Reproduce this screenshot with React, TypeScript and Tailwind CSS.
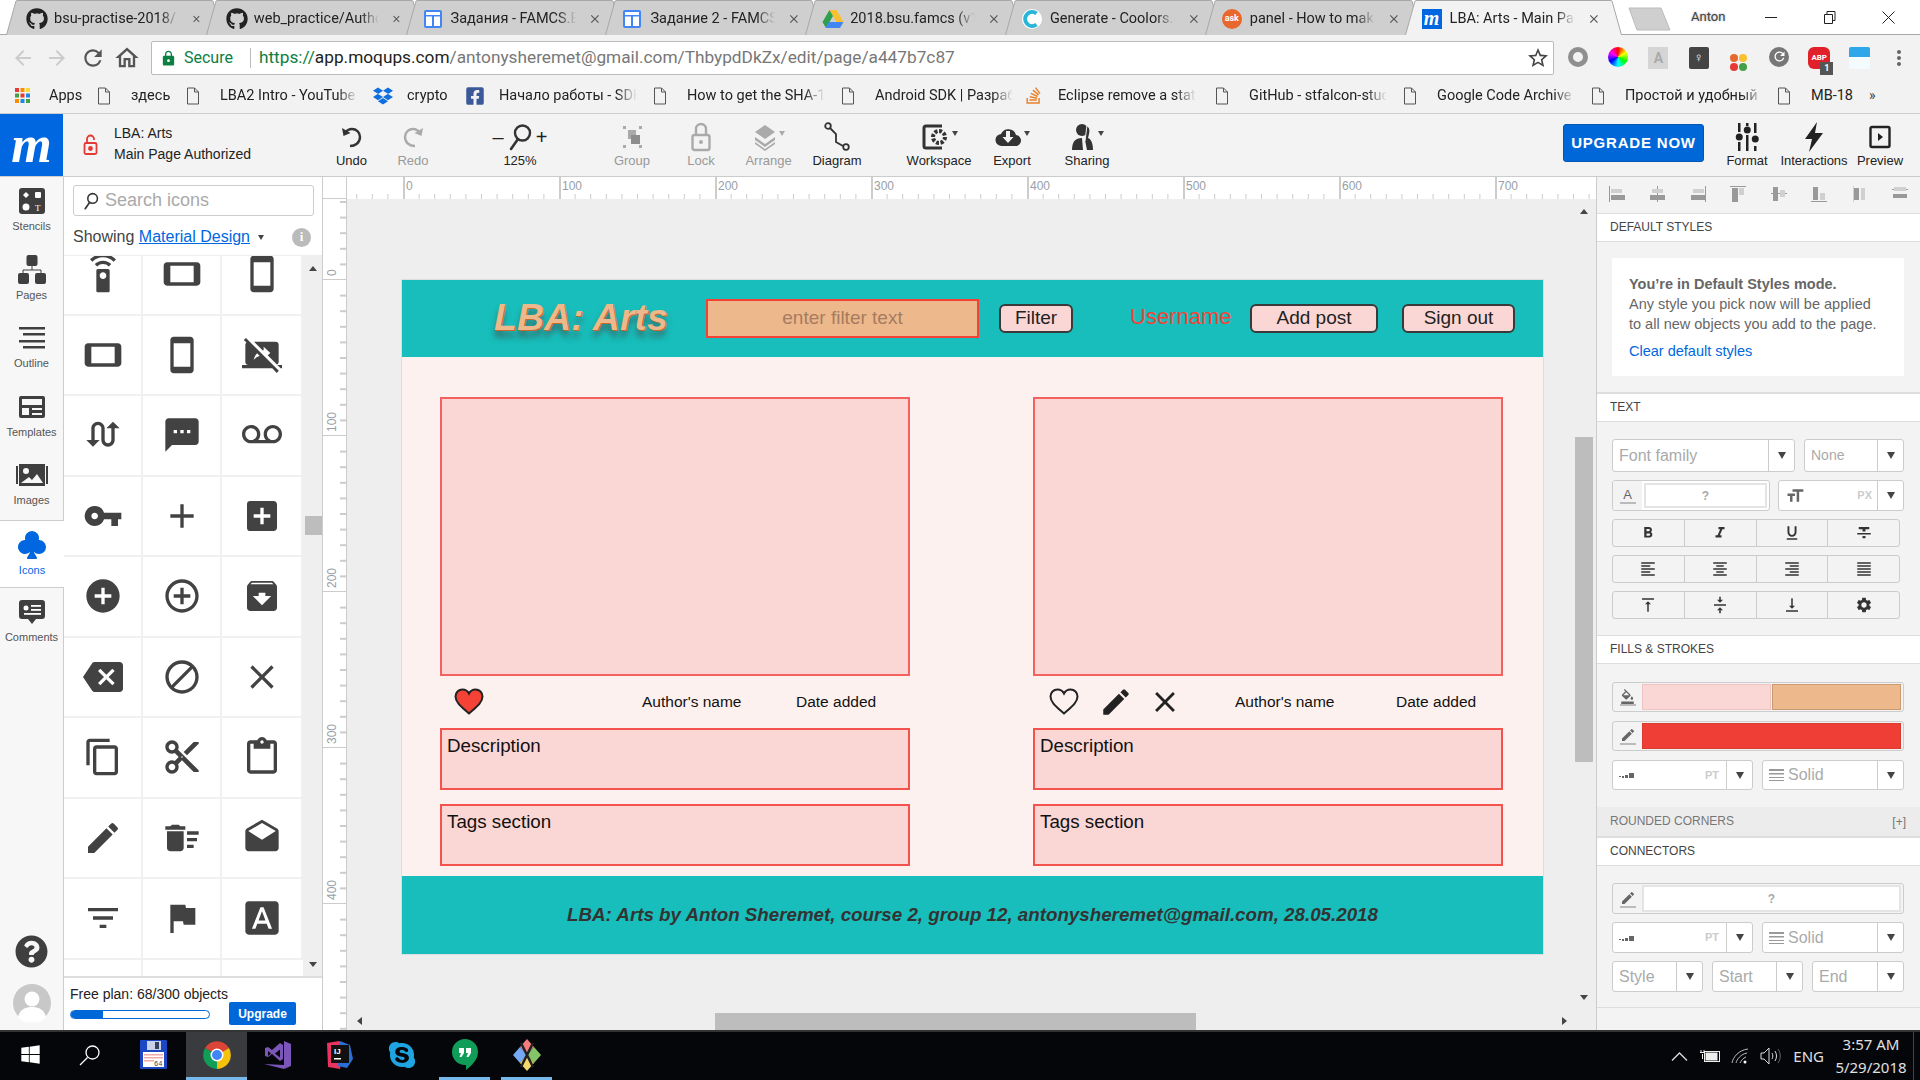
import React from 'react';
import { FaGithub, FaQuestionCircle, FaWindows, FaSkype, FaFacebookSquare, FaDropbox, FaStackOverflow } from 'react-icons/fa';
import { BsSuitClubFill } from 'react-icons/bs';
import {
  MdSettingsRemote, MdStayCurrentLandscape, MdStayCurrentPortrait, MdStayPrimaryLandscape, MdStayPrimaryPortrait, MdStopScreenShare,
  MdSwapCalls, MdTextsms, MdVoicemail, MdVpnKey, MdAdd, MdAddBox, MdAddCircle, MdControlPoint, MdArchive, MdBackspace, MdBlock, MdClear,
  MdContentCopy, MdContentCut, MdContentPaste, MdCreate, MdDeleteSweep, MdDrafts, MdFilterList, MdFlag, MdFontDownload, MdSettings,
  MdFormatBold, MdFormatItalic, MdFormatUnderlined, MdFormatStrikethrough, MdFormatAlignLeft, MdFormatAlignCenter, MdFormatAlignRight, MdFormatAlignJustify,
  MdVerticalAlignTop, MdVerticalAlignCenter, MdVerticalAlignBottom, MdFormatColorFill, MdFormatSize, MdClose, MdLock, MdArrowBack, MdArrowForward, MdRefresh, MdStarBorder, MdMoreVert, MdOutlineHome,
} from 'react-icons/md';

const Doc = () => (
  <svg width="14" height="18" viewBox="0 0 14 18" fill="none" stroke="#555" strokeWidth="1"><path d="M1.5 1h7l4 4v12h-11z" /><path d="M8.5 1v4h4" /></svg>
);
const AppsIcon = () => (
  <svg width="16" height="16" viewBox="0 0 16 16">
    {[['#e53935', '#fb8c00', '#fdd835'], ['#43a047', '#e53935', '#1e88e5'], ['#fb8c00', '#1e88e5', '#43a047']].map((r, y) => r.map((c, x) => <rect key={`${x}${y}`} x={x * 5.5} y={y * 5.5} width="4" height="4" fill={c} />))}
  </svg>
);
const DocTile = () => (
  <svg width="20" height="20" viewBox="0 0 20 20"><rect x="1" y="1" width="18" height="18" rx="2" fill="#4285f4" /><rect x="3" y="3" width="14" height="3" fill="#fff" /><rect x="3" y="7.5" width="6" height="9.5" fill="#fff" /><rect x="11" y="7.5" width="6" height="9.5" fill="#fff" /></svg>
);
const Drive = () => (
  <svg width="22" height="20" viewBox="0 0 22 20"><path d="M7.5 1h7l7 12h-7z" fill="#fbc02d" /><path d="M7.5 1l3.5 6-7 12L.5 13z" fill="#2e9e4f" /><path d="M7 13h14.5L18 19H3.5z" fill="#4285f4" /></svg>
);
const Coolors = () => (
  <svg width="20" height="20" viewBox="0 0 20 20"><circle cx="10" cy="10" r="10" fill="#fff" /><path d="M14.5 4.5a7 7 0 1 0 0 11" fill="none" stroke="#27b5d8" strokeWidth="4" /></svg>
);
const Ask = () => (
  <div className="w-[20px] h-[20px] rounded-full bg-[#e8672c] text-white text-[9px] font-bold flex items-center justify-center">ask</div>
);
const MTile = () => (
  <div className="w-[20px] h-[20px] bg-[#0067e0] text-white text-[20px] leading-[18px] italic font-bold text-center font-['Liberation_Serif',serif]">m</div>
);

const tabs: [string, React.ReactNode, string][] = [
  ['bsu-practise-2018/', <FaGithub size={22} color="#222" />, 'w-[28px]'],
  ['web_practice/Authorization', <FaGithub size={22} color="#222" />, 'w-[28px]'],
  ['Задания - FAMCS.BSU', <DocTile />, 'w-[28px] -ml-[3px]'],
  ['Задание 2 - FAMCS.BSU', <DocTile />, 'w-[28px] -ml-[3px]'],
  ['2018.bsu.famcs (v1.0)', <Drive />, 'w-[28px] -ml-[3px]'],
  ['Generate - Coolors.co', <Coolors />, 'w-[28px] -ml-[3px]'],
  ['panel - How to make', <Ask />, 'w-[28px] -ml-[3px]'],
  ['LBA: Arts - Main Page', <MTile />, 'w-[28px] -ml-[3px]'],
];

const Tab = ({ label, icon, active, iw }: { label: string; icon: React.ReactNode; active?: boolean; iw: string }) => (
  <div className="relative w-[199.800px] h-[35px] shrink-0">
    <svg className="absolute left-[-6px] top-0" width="217" height="36" viewBox="0 0 217 36">
      <path d="M0.5 35 L10 1 Q10.5 0.5 12 0.5 H205 Q206.5 0.5 207 1 L216.5 35" fill={active ? '#f2f2f2' : '#cfcfcf'} stroke="#a8a8a8" strokeWidth="1" />
    </svg>
    <div className="relative flex items-center h-full pl-[14px] pr-[10px] pt-[2px] text-[#222]">
      <div className={`${iw} shrink-0 flex`}>{icon}</div>
      <div className="w-[125px] shrink-0 overflow-hidden whitespace-nowrap text-[14.5px] [mask-image:linear-gradient(to_right,black_85%,transparent)]">{label}</div>
      <MdClose size={14} color="#555" className="ml-[12px]" />
    </div>
  </div>
);

const bookmarks: [string, React.ReactNode, string][] = [
  ['Apps', <AppsIcon />, 'w-[82px]'],
  ['здесь', <Doc />, 'w-[89px]'],
  ['LBA2 Intro - YouTube', <Doc />, 'w-[187px]'],
  ['crypto', <FaDropbox size={20} color="#0d6fe0" />, 'w-[92px]'],
  ['Начало работы - SDK', <FaFacebookSquare size={20} color="#3b5998" />, 'w-[188px]'],
  ['How to get the SHA-1', <Doc />, 'w-[188px]'],
  ['Android SDK | Разработка', <Doc />, 'w-[183px]'],
  ['Eclipse remove a static', <FaStackOverflow size={19} color="#e8812c" />, 'w-[191px]'],
  ['GitHub - stfalcon-studio', <Doc />, 'w-[188px]'],
  ['Google Code Archive', <Doc />, 'w-[188px]'],
  ['Простой и удобный', <Doc />, 'w-[186px]'],
  ['MB-18', <Doc />, 'w-[92px]'],
];

const Tool = ({ w, label, icon, off, caret }: { w: string; label: string; icon: React.ReactNode; off?: boolean; caret?: boolean }) => (
  <div className={`${w} shrink-0 flex flex-col items-center ${off ? 'text-[#999]' : 'text-[#222]'}`}>
    <div className="h-[31px] flex items-center justify-center relative">
      {icon}
      {caret && <span className={`ml-[2px] mb-[6px] w-0 h-0 border-x-[3.5px] border-x-transparent border-t-[5px] ${off ? 'border-t-[#aaa]' : 'border-t-[#444]'}`} />}
    </div>
    <div className="text-[13px] leading-[15px] mt-[1px] whitespace-nowrap">{label}</div>
  </div>
);

const D = '#333';
const G = '#aaa';
const UndoI = ({ c, flip }: { c: string; flip?: boolean }) => (
  <svg width="26" height="26" viewBox="0 0 26 26" fill="none" className={flip ? '-scale-x-100' : ''}><path d="M11 22c5 0 10-3 10-9 0-5-4-8-8-8-3 0-5 1-7 4" stroke={c} strokeWidth="2.4" /><path d="M3 4l1.500 8 7-3z" fill={c} /></svg>
);
const SearchI = ({ s = 28, c = D }: { s?: number; c?: string }) => (
  <svg width={s} height={s} viewBox="0 0 28 28" fill="none"><circle cx="16.500" cy="10" r="7.500" stroke={c} strokeWidth="2.400" /><path d="M12 16l-7 10" stroke={c} strokeWidth="2.600" strokeLinecap="round" /></svg>
);
const GroupI = () => (
  <svg width="26" height="28" viewBox="0 0 26 28" fill={G}><rect x="9" y="7" width="8" height="9" /><rect x="12" y="12" width="9" height="9" fill="#8d8d8d" /><rect x="4" y="3" width="3" height="3" /><rect x="20" y="3" width="3" height="3" /><rect x="4" y="22" width="3" height="3" /><rect x="20" y="22" width="3" height="3" /></svg>
);
const LockI = () => (
  <svg width="22" height="30" viewBox="0 0 22 30" fill="none"><path d="M6 13V7a5 5 0 0 1 10 0v6" stroke={G} strokeWidth="2.400" /><rect x="2.500" y="13" width="17" height="15" rx="2" stroke={G} strokeWidth="2.400" /><circle cx="11" cy="20" r="2" fill={G} /></svg>
);
const ArrangeI = () => (
  <svg width="24" height="28" viewBox="0 0 24 28" fill={G}><path d="M12 2l10 7-10 7L2 9z" /><path d="M2 14l10 7 10-7v3l-10 7-10-7z" /><path d="M2 19l10 7 10-7v2l-10 7-10-7z" /></svg>
);
const DiagramI = () => (
  <svg width="28" height="30" viewBox="0 0 28 30" fill="none" stroke="#333" strokeWidth="1.800"><circle cx="5" cy="4" r="2.800" /><circle cx="23" cy="25" r="2.800" /><path d="M7 6l6 6v8l7 4" /></svg>
);
const WorkspaceI = () => (
  <svg width="30" height="30" viewBox="0 0 30 30" fill="none"><path d="M22 4H6a2 2 0 0 0-2 2v18a2 2 0 0 0 2 2h16" stroke="#333" strokeWidth="3" /><circle cx="19" cy="15" r="6" fill="none" stroke="#333" strokeWidth="4" strokeDasharray="3 1.600" /></svg>
);
const ExportI = () => (
  <svg width="28" height="24" viewBox="0 0 28 24"><path d="M8 21a6 6 0 0 1-1-12 8 8 0 0 1 15 1 5.500 5.500 0 0 1-1 11z" fill="#333" /><path d="M12 6h4v6h3.500L14 18l-5.500-6H12z" fill="#f3f3f3" /></svg>
);
const SharingI = () => (
  <svg width="26" height="28" viewBox="0 0 26 28" fill="#333"><circle cx="12" cy="7" r="6" /><path d="M2 27c0-8 3-12 10-12l1 12z" /><path d="M16 3c3 1 4 3 3 8l-1 4c3 1 5 5 5 12h-6l-2-10 2-14z" /><path d="M17 2l-2 16" stroke="#f3f3f3" strokeWidth="1" /></svg>
);
const FormatI = () => (
  <svg width="24" height="30" viewBox="0 0 24 30" fill="#222"><rect x="3" y="1" width="2.500" height="9" /><rect x="3" y="20" width="2.500" height="9" /><circle cx="4.250" cy="15" r="3.500" /><rect x="11" y="1" width="2.500" height="3" /><rect x="11" y="13" width="2.500" height="16" /><circle cx="12.250" cy="8" r="3.500" /><rect x="19" y="1" width="2.500" height="10" /><rect x="19" y="24" width="2.500" height="5" /><circle cx="20.250" cy="17" r="3.500" /></svg>
);
const BoltI = () => (
  <svg width="20" height="30" viewBox="0 0 20 30" fill="#222"><path d="M13 0L1 17h7l-3 13 14-19h-8z" /></svg>
);
const PreviewI = () => (
  <svg width="22" height="24" viewBox="0 0 22 24" fill="none"><rect x="1.500" y="2" width="19" height="20" rx="1.500" stroke="#222" strokeWidth="2.400" /><path d="M9 8l5 4-5 4z" fill="#222" /></svg>
);

const Header = () => (
  <div className="h-[63px] shrink-0 flex items-start bg-[#f3f3f3] border-b border-[#ccc]">
    <div className="w-[63px] h-[62px] shrink-0 bg-[#0067e0] text-white flex items-center justify-center text-[52px] leading-none italic font-bold font-['Liberation_Serif',serif]">m</div>
    <div className="w-[257px] shrink-0 flex items-center h-[62px] pl-[20px]">
      <svg width="15" height="24" viewBox="0 0 15 24" fill="none" stroke="#e53935" strokeWidth="1.800"><path d="M4 10V6a3.500 3.500 0 0 1 7 0v1" /><rect x="1.500" y="10" width="12" height="11" rx="1.500" /><circle cx="7.500" cy="15.500" r="1.500" fill="#e53935" /></svg>
      <div className="ml-[16px] -mt-[2px] text-[14px] leading-[21px] text-[#222] whitespace-nowrap"><div>LBA: Arts</div><div>Main Page Authorized</div></div>
    </div>
    <div className="flex pt-[7px]">
      <Tool w="w-[63px]" label="Undo" icon={<UndoI c="#333" />} />
      <Tool w="w-[60px]" label="Redo" off icon={<UndoI c="#aaa" flip />} />
      <Tool w="w-[154px]" label="125%" icon={<div className="flex items-center text-[20px] text-[#222]"><span className="mr-[2px]">–</span><SearchI /><span className="ml-[2px]">+</span></div>} />
      <Tool w="w-[70px]" label="Group" off icon={<GroupI />} />
      <Tool w="w-[68px]" label="Lock" off icon={<LockI />} />
      <Tool w="w-[67px]" label="Arrange" off caret icon={<ArrangeI />} />
      <Tool w="w-[70px]" label="Diagram" icon={<DiagramI />} />
      <div className="w-[28px]" />
      <Tool w="w-[78px]" label="Workspace" caret icon={<WorkspaceI />} />
      <Tool w="w-[68px]" label="Export" caret icon={<ExportI />} />
      <Tool w="w-[82px]" label="Sharing" caret icon={<SharingI />} />
    </div>
    <div className="flex-1" />
    <div className="w-[141px] h-[38px] mt-[10px] rounded-[3px] bg-[#0067d8] border border-[#0055b5] text-white text-[15px] font-bold tracking-[0.8px] flex items-center justify-center">UPGRADE NOW</div>
    <div className="flex pt-[7px] ml-[14px] mr-[12px]">
      <Tool w="w-[58px]" label="Format" icon={<FormatI />} />
      <Tool w="w-[76px]" label="Interactions" icon={<BoltI />} />
      <Tool w="w-[56px]" label="Preview" icon={<PreviewI />} />
    </div>
  </div>
);

const Stencils = () => (
  <svg width="26" height="26" viewBox="0 0 26 26"><rect width="26" height="26" rx="3" fill="#3f3f3f" /><path d="M7 4l3 3-3 3-3-3z" fill="#fff" /><rect x="16" y="4" width="6" height="6" rx="1" fill="#fff" /><circle cx="7" cy="19" r="3.500" fill="#fff" /><text x="16" y="23" fontSize="9" fontFamily="Liberation Serif" fill="#fff">T</text></svg>
);
const Pages = () => (
  <svg width="28" height="30" viewBox="0 0 28 30" fill="#3f3f3f"><rect x="8.500" y="0" width="11" height="11" rx="2" /><rect x="0" y="18" width="11" height="11" rx="2" /><rect x="17" y="18" width="11" height="11" rx="2" /><path d="M14 11v4M5 18v-3h18v3" fill="none" stroke="#3f3f3f" /></svg>
);
const Outline = () => (
  <svg width="28" height="24" viewBox="0 0 28 24" fill="#3f3f3f"><rect x="1" y="1" width="26" height="2.500" /><rect x="5" y="7" width="22" height="2.500" /><rect x="1" y="14" width="26" height="2.500" /><rect x="5" y="20" width="22" height="2.500" /></svg>
);
const Templates = () => (
  <svg width="26" height="22" viewBox="0 0 26 22" fill="#3f3f3f"><path fillRule="evenodd" d="M2 0h22a2 2 0 0 1 2 2v18a2 2 0 0 1-2 2H2a2 2 0 0 1-2-2V2a2 2 0 0 1 2-2zM3 3v6h20V3zM3 12v7h7v-7zM13 12v2h10v-2zM13 17v2h10v-2z" /></svg>
);
const Images = () => (
  <svg width="32" height="22" viewBox="0 0 32 22" fill="#3f3f3f"><rect x="0" y="2" width="2" height="18" /><rect x="30" y="2" width="2" height="18" /><path fillRule="evenodd" d="M3 0h26v22H3zM10 4a3 3 0 1 0 0 6 3 3 0 0 0 0-6zM5 19h22l-6-9-5 6-3-3z" /></svg>
);
const Comments = () => (
  <svg width="26" height="24" viewBox="0 0 26 24" fill="#3f3f3f"><path d="M3 0h20a3 3 0 0 1 3 3v13a3 3 0 0 1-3 3h-6l-4 5-4-5H3a3 3 0 0 1-3-3V3a3 3 0 0 1 3-3z" /><circle cx="7" cy="8" r="2.500" fill="#fff" /><rect x="12" y="5" width="10" height="1.800" fill="#fff" /><rect x="12" y="9" width="10" height="1.800" fill="#fff" /><rect x="5" y="13" width="17" height="1.800" fill="#fff" /></svg>
);

const RailItem = ({ label, icon, active }: { label: string; icon: React.ReactNode; active?: boolean }) => (
  <div className={`h-[68.500px] flex flex-col items-center pt-[8px] ${active ? 'bg-white w-[64px] border-y border-[#ccc] text-[#0067e0]' : 'text-[#555]'}`}>
    <div className="h-[32px] flex items-center justify-center">{icon}</div>
    <div className="text-[11px] leading-[14px] mt-[2px]">{label}</div>
  </div>
);

const Rail = () => (
  <div className="w-[64px] shrink-0 bg-[#f7f7f7] border-r border-[#ccc] flex flex-col">
    <RailItem label="Stencils" icon={<Stencils />} />
    <RailItem label="Pages" icon={<Pages />} />
    <RailItem label="Outline" icon={<Outline />} />
    <RailItem label="Templates" icon={<Templates />} />
    <RailItem label="Images" icon={<Images />} />
    <RailItem active label="Icons" icon={<BsSuitClubFill size={32} color="#0067e0" />} />
    <RailItem label="Comments" icon={<Comments />} />
    <div className="flex-1" />
    <div className="flex justify-center mb-[16px]"><FaQuestionCircle size={33} color="#3f3f3f" /></div>
    <div className="flex justify-center mb-[8px]">
      <svg width="38" height="38" viewBox="0 0 38 38"><circle cx="19" cy="19" r="19" fill="#c8c8c8" /><circle cx="19" cy="15" r="7.500" fill="#fff" /><path d="M5 33c2-8 8-10 14-10s12 2 14 10a19 19 0 0 1-28 0z" fill="#fff" /></svg>
    </div>
  </div>
);

const gridIcons = [
  MdSettingsRemote, MdStayCurrentLandscape, MdStayCurrentPortrait, MdStayPrimaryLandscape, MdStayPrimaryPortrait, MdStopScreenShare,
  MdSwapCalls, MdTextsms, MdVoicemail, MdVpnKey, MdAdd, MdAddBox, MdAddCircle, MdControlPoint, MdArchive, MdBackspace, MdBlock, MdClear,
  MdContentCopy, MdContentCut, MdContentPaste, MdCreate, MdDeleteSweep, MdDrafts, MdFilterList, MdFlag, MdFontDownload,
];

const Panel = () => (
  <div className="w-[259px] shrink-0 bg-white border-r border-[#ccc] flex flex-col">
    <div className="h-[79px] shrink-0 border-b border-[#eee] pl-[9px] pr-[8px] pt-[8px]">
      <div className="h-[31px] border border-[#ccc] rounded-[3px] flex items-center pl-[8px] text-[18px] text-[#aaa]">
        <SearchI s={18} c="#333" /><span className="ml-[5px]">Search icons</span>
      </div>
      <div className="flex items-center h-[20px] mt-[11px] text-[16px] text-[#444] whitespace-nowrap">
        Showing&nbsp;<span className="text-[#0067e0] underline">Material Design</span>
        <span className="ml-[8px] w-0 h-0 border-x-[3px] border-x-transparent border-t-[5px] border-t-[#444]" />
        <span className="ml-auto mr-[3px] w-[19px] h-[19px] rounded-full bg-[#bbb] text-white text-[13px] font-bold flex items-center justify-center font-['Liberation_Serif',serif]">i</span>
      </div>
    </div>
    <div className="h-[720px] shrink-0 flex overflow-hidden">
      <div className="w-[239px] shrink-0 overflow-hidden">
        <div className="grid grid-cols-[79px_79px_81px] auto-rows-[80.500px] -mt-[21px]">
          {gridIcons.map((I, i) => (
            <div key={i} className="flex items-center justify-center border-b-2 border-r-2 border-[#f0f0f0]"><I size={40} color="#424242" /></div>
          ))}
          <div className="border-r-2 border-[#f0f0f0]" /><div className="border-r-2 border-[#f0f0f0]" />
        </div>
      </div>
      <div className="w-[20px] shrink-0 bg-[#efefef] flex flex-col items-center">
        <span className="mt-[10px] w-0 h-0 border-x-[4px] border-x-transparent border-b-[5px] border-b-[#444]" />
        <div className="mt-[245px] w-[17px] h-[19px] bg-[#bdbdbd]" />
        <div className="flex-1" />
        <span className="mb-[9px] w-0 h-0 border-x-[4px] border-x-transparent border-t-[5px] border-t-[#444]" />
      </div>
    </div>
    <div className="flex-1 border-t-2 border-[#ddd] pl-[6px] pt-[8px] relative">
      <div className="text-[14px] leading-[16px] text-[#222] whitespace-nowrap">Free plan: 68/300 objects</div>
      <div className="flex items-center">
        <div className="w-[140px] h-[9px] rounded-full border border-[#0067d8] overflow-hidden mt-[1px]"><div className="w-[32px] h-full bg-[#0067d8]" /></div>
        <div className="ml-[19px] w-[67px] h-[23px] rounded-[2px] bg-[#0067d8] text-white text-[12px] font-bold flex items-center justify-center">Upgrade</div>
      </div>
    </div>
  </div>
);

const HRuler = () => {
  const ticks = Array.from({ length: 80 }, (_, i) => i);
  return (
    <svg width="1249" height="23" viewBox="0 0 1249 23" className="block">
      <rect width="1249" height="23" fill="#fff" />
      {ticks.map(i => {
        const x = 56 - 46.800 + i * 15.600;
        const big = (i - 3) % 10 === 0;
        return <rect key={i} x={x} y={big ? 0 : 17} width={big ? 2 : 1} height={big ? 22 : 5} fill="#ccc" />;
      })}
      {[0, 100, 200, 300, 400, 500, 600, 700].map((n, i) => (
        <text key={n} x={59 + i * 156} y={13} fontSize="12" fontFamily="Liberation Sans" fill="#98a0a8">{n}</text>
      ))}
      <rect y="22" width="1249" height="1" fill="#ccc" />
    </svg>
  );
};

const VRuler = () => {
  const ticks = Array.from({ length: 56 }, (_, i) => i);
  return (
    <svg width="24" height="831" viewBox="0 0 24 831" className="block shrink-0">
      <rect width="24" height="831" fill="#fff" />
      {ticks.map(i => {
        const y = 80 - 78 + i * 15.600;
        const big = (i - 5) % 10 === 0;
        return <rect key={i} x={big ? 0 : 17} y={y} width={big ? 23 : 6} height={big ? 1 : 2} fill="#ccc" />;
      })}
      {[0, 100, 200, 300, 400].map((n, i) => (
        <text key={n} transform={`translate(13 ${77 + i * 156}) rotate(-90)`} fontSize="12" fontFamily="Liberation Sans" fill="#98a0a8">{n}</text>
      ))}
      <rect x="23" width="1" height="831" fill="#ccc" />
    </svg>
  );
};

const Btn = ({ w, children }: { w: string; children: React.ReactNode }) => (
  <div className={`${w} h-[29px] shrink-0 rounded-[6px] border-2 border-[#3a3a3a] bg-[#fad7d5] text-[#222] text-[19px] flex items-center justify-center`}>{children}</div>
);

const Heart = ({ fill }: { fill: string }) => (
  <svg width="30" height="27" viewBox="0 0 30 27"><path d="M15 25.500C9 20 1.500 15 1.500 8.500 1.500 4.500 4.500 1.500 8.500 1.500c2.800 0 5.200 1.500 6.500 4 1.300-2.500 3.700-4 6.500-4 4 0 7 3 7 7 0 6.500-7.500 11.500-13.500 17z" fill={fill} stroke="#222" strokeWidth="2" /></svg>
);

const Card = ({ ml, second }: { ml: string; second?: boolean }) => (
  <div className={`w-[470px] shrink-0 ${ml}`}>
    <div className="h-[279px] border-2 border-[#f4625f] bg-[#fad7d5]" />
    <div className="h-[52px] pb-[1px] flex items-center text-[15.500px] text-[#111] whitespace-nowrap">
      {second ? (
        <>
          <div className="ml-[16px]"><Heart fill="none" /></div>
          <MdCreate size={34} color="#222" className="ml-[20px]" />
          <MdClear size={34} color="#222" className="ml-[15px]" />
          <span className="ml-[53px] w-[161px]">Author's name</span>
          <span>Date added</span>
        </>
      ) : (
        <>
          <div className="ml-[14px]"><Heart fill="#f44336" /></div>
          <span className="ml-[158px] w-[154px]">Author's name</span>
          <span>Date added</span>
        </>
      )}
    </div>
    <div className="h-[62px] border-2 border-[#f4524d] bg-[#fad7d5] pl-[5px] pt-[4px] text-[18.750px] leading-[24px] text-[#111]">Description</div>
    <div className="h-[62px] mt-[14px] border-2 border-[#f4524d] bg-[#fad7d5] pl-[5px] pt-[4px] text-[18.750px] leading-[24px] text-[#111]">Tags section</div>
  </div>
);

const Mock = () => (
  <div className="w-[1143px] h-[676px] border border-[#ddd] bg-[#fdf1ef] flex flex-col">
    <div className="h-[77px] shrink-0 bg-[#17bebb] flex items-center">
      <div className="ml-[92px] w-[212px] shrink-0 text-[37.600px] leading-none font-bold italic text-[#edb88b] [text-shadow:1px_1px_0_#c9682a,0_7px_6px_rgba(70,60,60,0.6)] -mt-[1px] whitespace-nowrap">LBA: Arts</div>
      <div className="w-[273px] h-[39px] shrink-0 border-2 border-[#f44336] bg-[#edb88b] text-[#a67c60] text-[19px] flex items-center justify-center -mt-[1px]">enter filter text</div>
      <div className="ml-[20px]"><Btn w="w-[74px]">Filter</Btn></div>
      <div className="ml-[57px] w-[120px] shrink-0 text-[22px] text-[#f44336] -mt-[5px]">Username</div>
      <Btn w="w-[128px]">Add post</Btn>
      <div className="ml-[24px]"><Btn w="w-[113px]">Sign out</Btn></div>
    </div>
    <div className="flex pt-[40px]">
      <Card ml="ml-[38px]" />
      <Card ml="ml-[123px]" second />
    </div>
    <div className="flex-1" />
    <div className="h-[78px] shrink-0 bg-[#17bebb] flex items-center justify-center text-[#333] text-[18.750px] font-bold italic whitespace-nowrap">LBA: Arts by Anton Sheremet, course 2, group 12, antonysheremet@gmail.com, 28.05.2018</div>
  </div>
);

const Canvas = () => (
  <div className="relative flex-1 bg-[#eeeeee] pl-[54px] pt-[80px] overflow-hidden">
    <Mock />
    <div className="absolute left-[1228px] top-[238px] w-[18px] h-[325px] bg-[#bdbdbd]" />
    <div className="absolute left-[368px] bottom-0 w-[481px] h-[17px] bg-[#bdbdbd]" />
    <span className="absolute left-[1233px] top-[10px] w-0 h-0 border-x-[4px] border-x-transparent border-b-[5px] border-b-[#444]" />
    <span className="absolute left-[1233px] top-[796px] w-0 h-0 border-x-[4px] border-x-transparent border-t-[5px] border-t-[#444]" />
    <span className="absolute left-[10px] bottom-[5px] w-0 h-0 border-y-[4px] border-y-transparent border-r-[5px] border-r-[#444]" />
    <span className="absolute left-[1215px] bottom-[5px] w-0 h-0 border-y-[4px] border-y-transparent border-l-[5px] border-l-[#444]" />
  </div>
);

const Caret = () => <span className="w-0 h-0 border-x-[4.500px] border-x-transparent border-t-[7px] border-t-[#444]" />;

const Sel = ({ w, h = 'h-[31px]', cw = 'w-[26px]', children, cls = '' }: { w: string; h?: string; cw?: string; children: React.ReactNode; cls?: string }) => (
  <div className={`${w} ${h} shrink-0 flex border border-[#ccc] rounded-[3px] bg-white overflow-hidden`}>
    <div className={`flex-1 flex items-center px-[6px] text-[#aaa] ${cls}`}>{children}</div>
    <div className={`${cw} shrink-0 border-l border-[#ccc] flex items-center justify-center`}><Caret /></div>
  </div>
);

const SecHead = ({ children, gray, right }: { children: React.ReactNode; gray?: boolean; right?: string }) => (
  <div className={`shrink-0 flex items-center justify-between pl-[13px] pr-[14px] text-[12px] border-b border-[#ddd] ${gray ? 'h-[30px] bg-[#ececec] text-[#777]' : 'h-[29px] bg-white border-t text-[#444]'}`}>
    <span className="-mt-[1px]">{children}</span>{right && <span>{right}</span>}
  </div>
);

const Pen = () => <div className="flex flex-col items-center"><MdCreate size={16} color="#666" /><div className="w-[16px] h-[2px] bg-[#bbb]" /></div>;
const Dots = () => (
  <svg width="16" height="8" viewBox="0 0 16 8" fill="#666"><rect x="0" y="5" width="2" height="1" /><rect x="3" y="5" width="2" height="2" /><rect x="6" y="4" width="3" height="3" /><rect x="10" y="2" width="5" height="5" /></svg>
);
const SolidI = () => (
  <svg width="15" height="12" viewBox="0 0 15 12" fill="#999"><rect width="15" height="2" /><rect y="4" width="15" height="1.500" /><rect y="8" width="15" height="1" /><rect y="11" width="15" height="1" /></svg>
);

const Seg = ({ items }: { items: React.ReactNode[] }) => (
  <div className="w-[288px] h-[28px] flex border border-[#ccc] rounded-[3px]">
    {items.map((it, i) => <div key={i} className={`flex-1 flex items-center justify-center ${i ? 'border-l border-[#ccc]' : ''}`}>{it}</div>)}
  </div>
);

const aligns = [
  [[0, 0, 1, 16], [2, 3, 11, 4, 1], [2, 9, 14, 5]],
  [[8, 0, 1, 16], [3, 3, 11, 4, 1], [1, 9, 15, 5]],
  [[15, 0, 1, 16], [3, 3, 11, 4, 1], [1, 9, 14, 5]],
  [[0, 0, 16, 1], [2, 2, 6, 14], [9, 2, 5, 7, 1]],
  [[0, 7, 16, 1], [2, 1, 5, 14], [9, 4, 5, 7, 1]],
  [[0, 15, 16, 1], [2, 1, 5, 13], [9, 7, 5, 7, 1]],
  [[3, 2, 5, 12], [2, 0, 1, 16, 1], [10, 2, 4, 12, 1]],
  [[0, 3, 16, 1], [2, 1, 12, 4, 1], [1, 8, 14, 4]],
];

const RightPanel = () => (
  <div className="w-[324px] shrink-0 border-l border-[#ccc] bg-[#f3f3f3] flex flex-col">
    <div className="h-[36px] shrink-0 flex items-center pl-[12px] -mt-[1px]">
      {aligns.map((a, i) => (
        <div key={i} className="w-[40.400px] shrink-0 flex justify-start">
          <svg width="16" height="16" viewBox="0 0 16 16">
            {a.map((r, j) => <rect key={j} x={r[0]} y={r[1]} width={r[2]} height={r[3]} fill={r[4] ? '#d0d0d0' : '#999'} />)}
          </svg>
        </div>
      ))}
    </div>
    <div className="h-px shrink-0" />
    <SecHead>DEFAULT STYLES</SecHead>
    <div className="h-[151px] shrink-0 pl-[15px] pt-[16px] border-b border-[#ddd]">
      <div className="w-[292px] h-[118px] bg-white pl-[17px] pt-[16px] text-[14.500px] leading-[20px] text-[#666]">
        <div className="font-bold">You’re in Default Styles mode.</div>
        <div>Any style you pick now will be applied</div>
        <div>to all new objects you add to the page.</div>
        <div className="text-[#0067e0] mt-[7px]">Clear default styles</div>
      </div>
    </div>
    <SecHead>TEXT</SecHead>
    <div className="h-[213px] shrink-0 pl-[15px] pt-[17px] flex flex-col">
      <div className="flex gap-[9px]">
        <Sel w="w-[183px]" h="h-[33px]" cls="text-[16px]">Font family</Sel>
        <Sel w="w-[100px]" h="h-[33px]" cls="text-[14px]">None</Sel>
      </div>
      <div className="flex gap-[8px] mt-[8px]">
        <div className="w-[158px] h-[31px] flex border border-[#ccc] rounded-[3px] bg-white">
          <div className="w-[29px] shrink-0 flex flex-col items-center justify-center text-[13px] leading-[14px] text-[#666] bg-[#f3f3f3] rounded-l-[3px]"><span>A</span><div className="w-[16px] h-[2px] bg-[#bbb]" /></div>
          <div className="flex-1 m-[2px] border-2 border-[#e4e4e4] flex items-center justify-center text-[12px] font-bold text-[#aaa]">?</div>
        </div>
        <Sel w="w-[126px]"><MdFormatSize size={20} color="#666" /><span className="ml-auto text-[11px] font-bold text-[#ccc] -mr-[1px]">PX</span></Sel>
      </div>
      <div className="flex flex-col gap-[8px] mt-[8px]">
        <Seg items={[<MdFormatBold size={18} color="#333" />, <MdFormatItalic size={18} color="#333" />, <MdFormatUnderlined size={18} color="#333" />, <MdFormatStrikethrough size={18} color="#333" />]} />
        <Seg items={[<MdFormatAlignLeft size={18} color="#333" />, <MdFormatAlignCenter size={18} color="#333" />, <MdFormatAlignRight size={18} color="#333" />, <MdFormatAlignJustify size={18} color="#333" />]} />
        <Seg items={[<MdVerticalAlignTop size={18} color="#333" />, <MdVerticalAlignCenter size={18} color="#333" />, <MdVerticalAlignBottom size={18} color="#333" />, <MdSettings size={18} color="#333" />]} />
      </div>
    </div>
    <SecHead>FILLS &amp; STROKES</SecHead>
    <div className="h-[143px] shrink-0 pl-[15px] pt-[18px] flex flex-col gap-[9px]">
      <div className="w-[292px] h-[30px] flex border border-[#ccc] rounded-[3px] bg-[#f3f3f3] pr-[2px]">
        <div className="w-[29px] shrink-0 flex flex-col items-center justify-center"><MdFormatColorFill size={15} color="#666" /><div className="w-[16px] h-[2px] bg-[#bbb]" /></div>
        <div className="flex-1 my-[1px] bg-[#fad7d5] border border-[#eec3c1]" />
        <div className="flex-1 my-[1px] ml-[1px] bg-[#edb88b] border border-[#c99a70]" />
      </div>
      <div className="w-[292px] h-[30px] flex border border-[#ccc] rounded-[3px] bg-[#f3f3f3] pr-[2px]">
        <div className="w-[29px] shrink-0 flex items-center justify-center"><Pen /></div>
        <div className="flex-1 my-[1px] bg-[#ef3e36] border border-[#d93a2e]" />
      </div>
      <div className="flex gap-[9px]">
        <Sel w="w-[141px]" h="h-[30px]"><Dots /><span className="ml-auto text-[11px] font-bold text-[#ccc] mr-[1px]">PT</span></Sel>
        <Sel w="w-[142px]" h="h-[30px]" cls="text-[16px]"><SolidI /><span className="ml-[4px]">Solid</span></Sel>
      </div>
    </div>
    <SecHead gray right="[+]">ROUNDED CORNERS</SecHead>
    <SecHead>CONNECTORS</SecHead>
    <div className="h-[142px] shrink-0 pl-[15px] pt-[17px] border-b border-[#ddd] flex flex-col gap-[8px]">
      <div className="w-[292px] h-[31px] flex border border-[#ccc] rounded-[3px] bg-[#f3f3f3] pr-[2px]">
        <div className="w-[29px] shrink-0 flex items-center justify-center"><Pen /></div>
        <div className="flex-1 my-[1px] bg-white border-2 border-[#e4e4e4] flex items-center justify-center text-[12px] font-bold text-[#aaa]">?</div>
      </div>
      <div className="flex gap-[9px]">
        <Sel w="w-[141px]"><Dots /><span className="ml-auto text-[11px] font-bold text-[#ccc] mr-[1px]">PT</span></Sel>
        <Sel w="w-[142px]" cls="text-[16px]"><SolidI /><span className="ml-[4px]">Solid</span></Sel>
      </div>
      <div className="flex gap-[9px]">
        <Sel w="w-[91px]" cls="text-[16px]">Style</Sel>
        <Sel w="w-[91px]" cls="text-[16px]">Start</Sel>
        <Sel w="w-[92px]" cls="text-[16px]">End</Sel>
      </div>
    </div>
  </div>
);

const ChromeLogo = () => (
  <svg width="28" height="28" viewBox="0 0 28 28">
    <path d="M14 14 L2 7 A14 14 0 0 1 26 7z" fill="#db4437" />
    <path d="M14 14 L26 7 A14 14 0 0 1 14 28z" fill="#f4c20d" />
    <path d="M14 14 L14 28 A14 14 0 0 1 2 7z" fill="#0f9d58" />
    <circle cx="14" cy="14" r="6.500" fill="#fff" /><circle cx="14" cy="14" r="5" fill="#4285f4" />
  </svg>
);
const VS = () => (
  <svg width="30" height="30" viewBox="0 0 30 30" fill="#7b55b8"><path d="M21 1l7 3v22l-7 3-20-5 20 1z" /><path d="M2 8l3-1 4 3 8-7 3 2v14l-3 2-8-7-4 3-3-1zM5 11v5l3-2.500zM12 13.500l5 4v-8z" fillRule="evenodd" /></svg>
);
const IJ = () => (
  <svg width="28" height="30" viewBox="0 0 28 30"><path d="M1 3l12-2 5 4-4 24-12-2z" fill="#e8345e" /><path d="M14 1l10 4 3 14-6 9-9-2z" fill="#2a6ed8" /><rect x="5" y="5" width="18" height="18" fill="#111" /><text x="8" y="14" fontSize="8" fontWeight="bold" fontFamily="Liberation Sans" fill="#fff">IJ</text><rect x="8" y="18" width="7" height="1.500" fill="#fff" /></svg>
);
const Hangouts = () => (
  <svg width="26" height="32" viewBox="0 0 26 32"><path d="M13 0a13 13 0 0 1 13 13c0 8-7 14-12 18v-5h-1a13 13 0 0 1 0-26z" fill="#0f9d58" /><path d="M7 9h5v5l-2.500 4h-2l1.500-4H7zM14 9h5v5l-2.500 4h-2l1.500-4H14z" fill="#fff" /></svg>
);
const GitK = () => (
  <svg width="28" height="32" viewBox="0 0 28 32"><path d="M14 0l7 8-7 8-7-8z" fill="#f47c7c" /><path d="M7 8l7 8-7 8-7-8z" fill="#76a9f5" /><path d="M21 8l7 8-7 8-7-8z" fill="#84c567" /><path d="M14 16l7 8-7 8-7-8z" fill="#f5d96b" /><path d="M8 4l12 24M20 4L8 28" stroke="#222" strokeWidth="2.500" /></svg>
);
const Floppy = () => (
  <svg width="27" height="29" viewBox="0 0 27 29"><rect width="27" height="29" rx="1" fill="#1c47c4" /><rect x="7" y="1" width="14" height="9" fill="#c9d1e6" /><rect x="15" y="2" width="4" height="7" fill="#33405f" /><rect x="3" y="12" width="21" height="15" fill="#fff" /><rect x="4" y="14" width="19" height="1.500" fill="#eaa" /><rect x="4" y="17" width="19" height="1.500" fill="#eaa" /><rect x="4" y="20" width="10" height="1.500" fill="#eaa" /><text x="14" y="26" fontSize="7" fontFamily="Liberation Mono" fill="#444">64</text></svg>
);

const TaskItem = ({ w, children, cls = '', bar }: { w: string; children?: React.ReactNode; cls?: string; bar?: string }) => (
  <div className={`${w} h-full shrink-0 flex flex-col ${cls}`}>
    <div className="flex-1 flex items-center justify-center">{children}</div>
    <div className={`h-[3px] ${bar ?? ''}`} />
  </div>
);

const Taskbar = () => (
  <div className="h-[50px] shrink-0 bg-[#04060a] border-t-2 border-[#333] flex text-[#e0e0e0] font-['Noto_Sans',sans-serif]">
    <TaskItem w="w-[60px]"><FaWindows size={21} color="#fff" /></TaskItem>
    <TaskItem w="w-[60px]"><svg width="22" height="22" viewBox="0 0 22 22" fill="none" stroke="#fff" strokeWidth="1.300"><circle cx="13.500" cy="8.500" r="6.500" /><path d="M8.500 13.500L1 21" /></svg></TaskItem>
    <TaskItem w="w-[66px]"><Floppy /></TaskItem>
    <TaskItem w="w-[61px]" cls="bg-[#3a3b3e]" bar="bg-[#76b9ed]"><ChromeLogo /></TaskItem>
    <TaskItem w="w-[62px]"><VS /></TaskItem>
    <TaskItem w="w-[62px]"><IJ /></TaskItem>
    <TaskItem w="w-[61px]"><FaSkype size={30} color="#1ea4e0" /></TaskItem>
    <div className="w-[7px]" />
    <TaskItem w="w-[51px]" bar="bg-[#76b9ed]"><Hangouts /></TaskItem>
    <div className="w-[11px]" />
    <TaskItem w="w-[51px]" bar="bg-[#76b9ed]"><GitK /></TaskItem>
    <div className="flex-1" />
    <div className="flex items-center h-full text-[15px]">
      <svg width="17" height="9" viewBox="0 0 17 9" fill="none" stroke="#ddd" strokeWidth="1.300"><path d="M1 8.500L8.500 1 16 8.500" /></svg>
      <svg className="ml-[12px]" width="20" height="14" viewBox="0 0 20 14" fill="none" stroke="#eee"><rect x="4.500" y="2.500" width="15" height="10" /><rect x="6" y="4" width="11" height="7" fill="#eee" /><path d="M1 1v2M4 1v2M0 3.500h5M2.500 5v5" /></svg>
      <svg className="ml-[11px]" width="18" height="16" viewBox="0 0 18 16" fill="none" stroke="#bbb"><path d="M1 15C2 9 8 2 17 1M5 15c1-4 5-9 11-10M9 15c1-2 3-5 6-6" /><circle cx="14" cy="14" r="1.500" fill="#fff" stroke="none" /></svg>
      <svg className="ml-[11px]" width="21" height="18" viewBox="0 0 21 18" fill="none" stroke="#ddd"><path d="M1 6h3l5-5v16l-5-5H1zM12 6c1 2 1 4 0 6M15 4c2 3 2 7 0 10" /><path d="M18 2c3 4 3 10 0 14" stroke="#666" /></svg>
      <span className="ml-[12px]">ENG</span>
      <div className="ml-[6px] w-[82px] text-center text-[15px] leading-[23px] -mt-[1px]"><div>3:57 AM</div><div>5/29/2018</div></div>
      <div className="ml-[1px] mr-[6px] w-px h-full bg-[#444]" />
    </div>
  </div>
);

const ext: React.ReactNode[] = [
  <div className="w-[20px] h-[20px] rounded-full border-[5px] border-[#8f8f8f]" />,
  <div className="w-[20px] h-[20px] rounded-full bg-[conic-gradient(#f00,#ff0,#0f0,#0ff,#00f,#f0f,#f00)]" />,
  <div className="w-[20px] h-[22px] bg-[#d5d5d5] text-[#aaa] text-[14px] font-bold text-center leading-[22px]">A</div>,
  <div className="w-[20px] h-[22px] rounded-[2px] bg-[#444] text-white text-[13px] flex items-center justify-center">♀</div>,
  <div className="w-[18px] h-[24px] flex flex-wrap gap-[1px] content-end justify-center"><span className="w-[8px] h-[8px] bg-[#e8672c] rounded-full" /><span className="w-[8px] h-[8px] bg-[#fbc02d] rounded-full" /><span className="w-[8px] h-[8px] bg-[#e53935] rounded-full" /><span className="w-[8px] h-[8px] bg-[#43a047] rounded-full" /></div>,
  <div className="w-[20px] h-[20px] rounded-full bg-[#777] text-white flex items-center justify-center"><MdRefresh size={15} /></div>,
  <div className="relative w-[22px] h-[22px] rounded-[6px] bg-[#e0202a] text-white text-[8px] font-bold flex items-center justify-center">ABP<span className="absolute -right-[3px] -bottom-[6px] w-[13px] h-[13px] bg-[#555] text-[9px] text-white text-center leading-[13px]">1</span></div>,
  <div className="w-[21px] h-[22px] rounded-[2px] bg-[#2ea6ea] flex items-end"><div className="w-full h-[12px] bg-[#f4fbff]" /></div>,
];

export default function App() {
  return (
    <div className="w-[1920px] h-[1080px] overflow-hidden flex flex-col bg-white font-['Liberation_Sans',sans-serif]">
      <div className="h-[35px] shrink-0 flex pl-[12px] relative border-b border-[#a8a8a8] font-['Roboto',sans-serif]">
        {tabs.map(([l, ic, iw], i) => <Tab key={i} label={l} icon={ic} iw={iw} active={i === 7} />)}
        <svg className="ml-[18px] mt-[7px]" width="44" height="24" viewBox="0 0 44 24"><path d="M1 1h32l9 22H9z" fill="#cfcfcf" stroke="#bbb" /></svg>
        <div className="absolute left-[1691px] top-[7px] text-[13px] text-[#444] [text-shadow:0_0_2px_#999]">Anton</div>
        <svg className="absolute left-[1765px] top-[17px]" width="12" height="1"><rect width="12" height="1" fill="#222" /></svg>
        <svg className="absolute left-[1824px] top-[11px]" width="12" height="13" fill="none" stroke="#222"><path d="M.5 3.500h8v9h-8zM3 3V.5h8v9H9" /></svg>
        <svg className="absolute left-[1882px] top-[11px]" width="13" height="13" stroke="#222"><path d="M.5.5l12 12M12.500.5l-12 12" /></svg>
      </div>
      <div className="h-[43px] shrink-0 bg-[#f2f2f2] flex items-center pt-[3px] font-['Roboto',sans-serif]">
        <MdArrowBack size={24} color="#ccc" className="ml-[11px]" />
        <MdArrowForward size={24} color="#ccc" className="ml-[10px]" />
        <MdRefresh size={26} color="#555" className="ml-[11px]" />
        <MdOutlineHome size={28} color="#555" className="ml-[7px]" />
        <div className="ml-[10px] w-[1403px] h-[34px] bg-white border border-[#bbb] rounded-[2px] flex items-center text-[16px] whitespace-nowrap">
          <MdLock size={17} color="#0b8043" className="ml-[8px]" />
          <span className="ml-[7px] text-[#0b8043]">Secure</span>
          <span className="ml-[17px] w-px h-[20px] bg-[#bbb]" />
          <span className="ml-[8px] text-[#0b8043] text-[17.250px]">https://</span>
          <span className="text-[#222] text-[17.250px]">app.moqups.com</span>
          <span className="text-[#777] text-[17.250px]">/antonysheremet@gmail.com/ThbypdDkZx/edit/page/a447b7c87</span>
          <MdStarBorder size={24} color="#444" className="ml-auto mr-[3px]" />
        </div>
        <div className="ml-[4px] mt-[1px] flex">
          {ext.map((e, i) => <div key={i} className="w-[40.200px] flex justify-center">{e}</div>)}
        </div>
        <MdMoreVert size={24} color="#666" className="ml-[7px]" />
      </div>
      <div className="h-[35px] shrink-0 bg-[#f2f2f2] flex items-center pl-[15px] font-['Roboto',sans-serif]">
        {bookmarks.map(([l, ic, w], i) => (
          <div key={i} className={`${w} shrink-0 flex items-center text-[14.500px] text-[#222] whitespace-nowrap`}>
            <div className="w-[34px] shrink-0 flex">{ic}</div>
            <div className={`overflow-hidden ${i === 11 ? '' : 'w-[138px] [mask-image:linear-gradient(to_right,black_85%,transparent)]'}`}>{l}</div>
          </div>
        ))}
        <span className="text-[#444] text-[14px]">»</span>
      </div>
      <div className="h-px shrink-0 bg-[#ccc]" />
      <Header />
      <div className="h-[853px] shrink-0 flex">
        <Rail />
        <Panel />
        <div className="w-[1273px] shrink-0 flex flex-col">
          <div className="flex shrink-0">
            <div className="w-[24px] h-[22px] bg-white border-b border-r border-[#ccc]" />
            <HRuler />
          </div>
          <div className="flex h-[831px] -mt-px">
            <VRuler />
            <Canvas />
          </div>
        </div>
        <RightPanel />
      </div>
      <Taskbar />
    </div>
  );
}
